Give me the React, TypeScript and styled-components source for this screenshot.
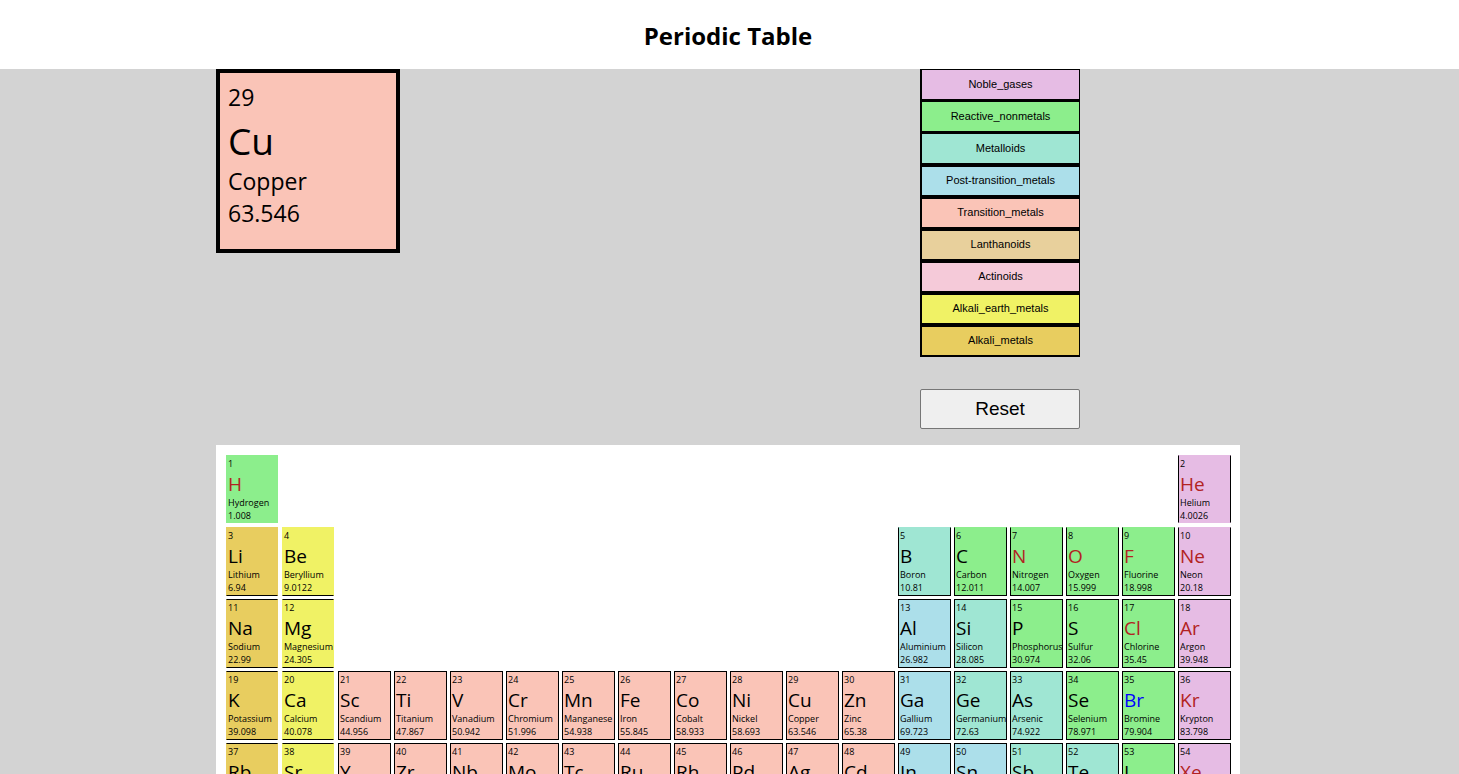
import React, { useState } from 'react';
import styled, { createGlobalStyle } from 'styled-components';

type Group =
  | 'Noble_gases'
  | 'Reactive_nonmetals'
  | 'Metalloids'
  | 'Post-transition_metals'
  | 'Transition_metals'
  | 'Lanthanoids'
  | 'Actinoids'
  | 'Alkali_earth_metals'
  | 'Alkali_metals';

const groupColors: Record<Group, string> = {
  Noble_gases: '#e6bce4',
  Reactive_nonmetals: '#8cee8c',
  Metalloids: '#9fe6d3',
  'Post-transition_metals': '#acdfea',
  Transition_metals: '#fac4b7',
  Lanthanoids: '#e8d09c',
  Actinoids: '#f5cad9',
  Alkali_earth_metals: '#f0f265',
  Alkali_metals: '#e8cd5f',
};

const groups = Object.keys(groupColors) as Group[];

type Phase = 'solid' | 'liquid' | 'gas';

const phaseColors: Record<Phase, string> = {
  solid: '#000000',
  liquid: '#0000ff',
  gas: '#b22222',
};

interface Element {
  number: number;
  symbol: string;
  name: string;
  mass: string;
  group: Group;
  row: number;
  column: number;
  phase: Phase;
}

type Entry = [string, string, string, Group, number, Phase?];

const N: Group = 'Noble_gases';
const R: Group = 'Reactive_nonmetals';
const M: Group = 'Metalloids';
const P: Group = 'Post-transition_metals';
const T: Group = 'Transition_metals';
const E: Group = 'Alkali_earth_metals';
const A: Group = 'Alkali_metals';

const periods: Entry[][] = [
  [
    ['H', 'Hydrogen', '1.008', R, 1, 'gas'],
    ['He', 'Helium', '4.0026', N, 18, 'gas'],
  ],
  [
    ['Li', 'Lithium', '6.94', A, 1],
    ['Be', 'Beryllium', '9.0122', E, 2],
    ['B', 'Boron', '10.81', M, 13],
    ['C', 'Carbon', '12.011', R, 14],
    ['N', 'Nitrogen', '14.007', R, 15, 'gas'],
    ['O', 'Oxygen', '15.999', R, 16, 'gas'],
    ['F', 'Fluorine', '18.998', R, 17, 'gas'],
    ['Ne', 'Neon', '20.18', N, 18, 'gas'],
  ],
  [
    ['Na', 'Sodium', '22.99', A, 1],
    ['Mg', 'Magnesium', '24.305', E, 2],
    ['Al', 'Aluminium', '26.982', P, 13],
    ['Si', 'Silicon', '28.085', M, 14],
    ['P', 'Phosphorus', '30.974', R, 15],
    ['S', 'Sulfur', '32.06', R, 16],
    ['Cl', 'Chlorine', '35.45', R, 17, 'gas'],
    ['Ar', 'Argon', '39.948', N, 18, 'gas'],
  ],
  [
    ['K', 'Potassium', '39.098', A, 1],
    ['Ca', 'Calcium', '40.078', E, 2],
    ['Sc', 'Scandium', '44.956', T, 3],
    ['Ti', 'Titanium', '47.867', T, 4],
    ['V', 'Vanadium', '50.942', T, 5],
    ['Cr', 'Chromium', '51.996', T, 6],
    ['Mn', 'Manganese', '54.938', T, 7],
    ['Fe', 'Iron', '55.845', T, 8],
    ['Co', 'Cobalt', '58.933', T, 9],
    ['Ni', 'Nickel', '58.693', T, 10],
    ['Cu', 'Copper', '63.546', T, 11],
    ['Zn', 'Zinc', '65.38', T, 12],
    ['Ga', 'Gallium', '69.723', P, 13],
    ['Ge', 'Germanium', '72.63', M, 14],
    ['As', 'Arsenic', '74.922', M, 15],
    ['Se', 'Selenium', '78.971', R, 16],
    ['Br', 'Bromine', '79.904', R, 17, 'liquid'],
    ['Kr', 'Krypton', '83.798', N, 18, 'gas'],
  ],
  [
    ['Rb', 'Rubidium', '85.468', A, 1],
    ['Sr', 'Strontium', '87.62', E, 2],
    ['Y', 'Yttrium', '88.906', T, 3],
    ['Zr', 'Zirconium', '91.224', T, 4],
    ['Nb', 'Niobium', '92.906', T, 5],
    ['Mo', 'Molybdenum', '95.95', T, 6],
    ['Tc', 'Technetium', '(98)', T, 7],
    ['Ru', 'Ruthenium', '101.07', T, 8],
    ['Rh', 'Rhodium', '102.91', T, 9],
    ['Pd', 'Palladium', '106.42', T, 10],
    ['Ag', 'Silver', '107.87', T, 11],
    ['Cd', 'Cadmium', '112.41', T, 12],
    ['In', 'Indium', '114.82', P, 13],
    ['Sn', 'Tin', '118.71', P, 14],
    ['Sb', 'Antimony', '121.76', M, 15],
    ['Te', 'Tellurium', '127.6', M, 16],
    ['I', 'Iodine', '126.9', R, 17],
    ['Xe', 'Xenon', '131.29', N, 18, 'gas'],
  ],
];

let counter = 0;
const elements: Element[] = periods.flatMap((period, index) =>
  period.map(([symbol, name, mass, group, column, phase = 'solid']) => ({
    number: ++counter,
    symbol,
    name,
    mass,
    group,
    row: index + 1,
    column,
    phase,
  })),
);

const GlobalStyle = createGlobalStyle`
  * {
    box-sizing: border-box;
  }

  html {
    scrollbar-width: none;
  }

  body {
    margin: 0;
    background: #d3d3d3;
    color: #000000;
    font-family: 'Segoe UI', 'Open Sans', 'Noto Sans', sans-serif;
  }
`;

const Header = styled.header`
  padding: 20px 3px 17px 0;
  background: #ffffff;
  text-align: center;
`;

const Title = styled.h1`
  margin: 0;
  font-size: 24px;
  line-height: 32px;
`;

const Main = styled.main`
  display: flex;
  flex-direction: column;
  align-items: center;
  padding-right: 3px;
`;

const Content = styled.div`
  width: 100%;
  max-width: 1024px;
`;

const Overview = styled.section`
  display: flex;
  align-items: flex-start;
  justify-content: space-between;
  padding: 0 160px 16px 0;
`;

const Card = styled.article<{ $color: string }>`
  display: flex;
  flex-direction: column;
  width: 184px;
  height: 184px;
  padding: 8px;
  border: 4px solid #000000;
  background: ${({ $color }) => $color};
  font-size: 23px;
  line-height: 32px;
`;

const CardSymbol = styled.span<{ $color: string }>`
  padding-top: 4px;
  color: ${({ $color }) => $color};
  font-size: 37px;
  line-height: 48px;
`;

const Filters = styled.div`
  display: flex;
  flex-direction: column;
  gap: 32px;
  width: 160px;
`;

const Legend = styled.div`
  display: flex;
  flex-direction: column;
`;

const LegendButton = styled.button<{ $color: string }>`
  height: 32px;
  padding: 0 0 2px;
  border: 2px solid #000000;
  border-right-width: 1px;
  border-radius: 0;
  background: ${({ $color }) => $color};
  color: #000000;
  font-family: 'Liberation Sans', Arial, sans-serif;
  font-size: 11px;
  cursor: pointer;

  &:nth-child(-n + 3) {
    border-top-width: 1px;
  }
`;

const ResetButton = styled.button`
  height: 40px;
  padding: 0;
  border: 1px solid #767676;
  border-radius: 2px;
  background: #efefef;
  color: #000000;
  font-family: 'Liberation Sans', Arial, sans-serif;
  font-size: 19px;
  cursor: pointer;
`;

const Board = styled.section`
  display: grid;
  grid-template-columns: repeat(18, minmax(0, 1fr));
  grid-auto-rows: 69px;
  gap: 3px;
  padding: 10px 9px 10px 10px;
  background: #ffffff;
`;

const Tile = styled.article<{
  $color: string;
  $row: number;
  $column: number;
  $dimmed: boolean;
}>`
  display: flex;
  flex-direction: column;
  grid-row: ${({ $row }) => $row};
  grid-column: ${({ $column }) => $column};
  margin-right: ${({ $column }) => ($column < 3 ? 1 : 0)}px;
  margin-bottom: ${({ $row }) => ($row < 2 ? 1 : 0)}px;
  padding: 2px 0 0 1px;
  border: 1px solid #000000;
  ${({ $column, $color }) => $column < 3 && `border-left-color: ${$color}; border-right-color: ${$color};`}
  ${({ $row, $color }) => $row < 3 && `border-top-color: ${$color};`}
  ${({ $row, $color }) => $row < 2 && `border-bottom-color: ${$color};`}
  background: ${({ $color }) => $color};
  font-size: 9px;
  line-height: 12px;
  white-space: nowrap;
  opacity: ${({ $dimmed }) => ($dimmed ? 0.2 : 1)};
  cursor: pointer;
`;

const TileSymbol = styled.span<{ $color: string }>`
  padding-top: 1px;
  color: ${({ $color }) => $color};
  font-size: 19px;
  line-height: 26px;
`;

const TileMass = styled.span`
  line-height: 13px;
`;

export default function App() {
  const [selected, setSelected] = useState<Element>(elements[28]);
  const [filter, setFilter] = useState<Group | null>(null);

  return (
    <>
      <GlobalStyle />
      <Header>
        <Title>Periodic Table</Title>
      </Header>
      <Main>
        <Content>
          <Overview>
            <Card $color={groupColors[selected.group]}>
              <span>{selected.number}</span>
              <CardSymbol $color={phaseColors[selected.phase]}>{selected.symbol}</CardSymbol>
              <span>{selected.name}</span>
              <span>{selected.mass}</span>
            </Card>
            <Filters>
              <Legend>
                {groups.map((group) => (
                  <LegendButton
                    key={group}
                    type="button"
                    $color={groupColors[group]}
                    onClick={() => setFilter(group)}
                  >
                    {group}
                  </LegendButton>
                ))}
              </Legend>
              <ResetButton type="button" onClick={() => setFilter(null)}>
                Reset
              </ResetButton>
            </Filters>
          </Overview>
          <Board>
            {elements.map((element) => (
              <Tile
                key={element.number}
                $color={groupColors[element.group]}
                $row={element.row}
                $column={element.column}
                $dimmed={filter !== null && filter !== element.group}
                onMouseEnter={() => setSelected(element)}
              >
                <span>{element.number}</span>
                <TileSymbol $color={phaseColors[element.phase]}>{element.symbol}</TileSymbol>
                <span>{element.name}</span>
                <TileMass>{element.mass}</TileMass>
              </Tile>
            ))}
          </Board>
        </Content>
      </Main>
    </>
  );
}
